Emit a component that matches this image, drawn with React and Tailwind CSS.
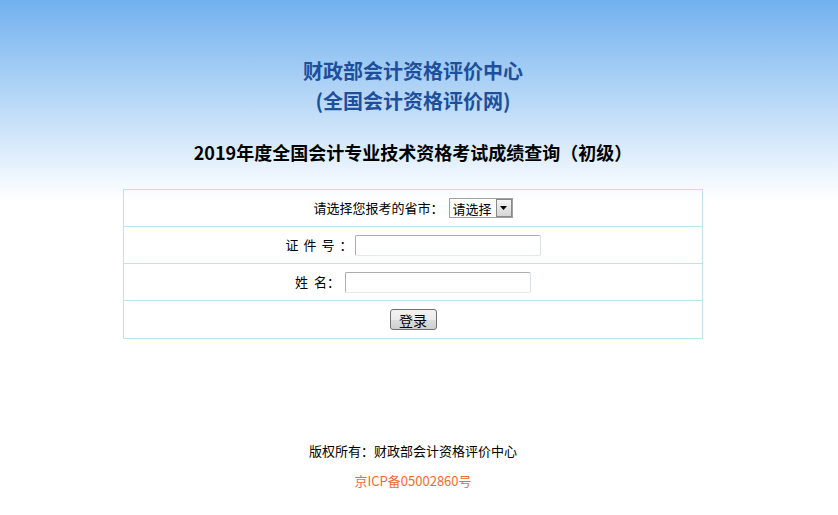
import { useState } from 'react';

const cjk = { fontFamily: '"Noto Sans CJK SC", "Liberation Sans", sans-serif' };

const Row = ({ children, last }) => (
  <div className={`flex h-[37px] items-center justify-center ${last ? '' : 'border-b border-[#bfe2f2]'}`}>{children}</div>
);

const App = () => {
  const [province, setProvince] = useState('');
  const [certNo, setCertNo] = useState('');
  const [name, setName] = useState('');

  return (
    <div className="min-h-screen bg-[linear-gradient(#71b1ef_0px,#ffffff_200px)] pr-[12px] text-[13px] text-black" style={cjk}>
      <div className="pt-[56px] text-center text-[20px] font-bold leading-[30px] text-[#1d4f9c]">
        <div>财政部会计资格评价中心</div>
        <div>(全国会计资格评价网)</div>
      </div>
      <h1 className="mt-[24px] text-center text-[18px] font-bold leading-[24px]">2019年度全国会计专业技术资格考试成绩查询（初级）</h1>

      <form className="mx-auto mt-[25px] w-[580px] border border-[#bfe2f2]" onSubmit={(e) => e.preventDefault()}>
        <Row>
          <span className="mr-[5px]">请选择您报考的省市：</span>
          <div className="relative h-[20px] w-[64px] border border-[#a0a0a0] bg-white">
            <select value={province} onChange={(e) => setProvince(e.target.value)} className="h-full w-full appearance-none bg-transparent pl-[3px] text-[13px] leading-[18px] outline-none" style={cjk}>
              <option value="">请选择</option>
            </select>
            <span className="pointer-events-none absolute right-0 top-0 flex h-[18px] w-[16px] items-center justify-center border border-[#888] bg-[linear-gradient(#f4f4f4,#d6d6d6)]">
              <svg width="7" height="4" viewBox="0 0 7 4"><path d="M0 0h7L3.5 4z" fill="#000" /></svg>
            </span>
          </div>
        </Row>
        <Row>
          <span className="tracking-[5px]">证件号</span>
          <span className="mr-[2px]">：</span>
          <input value={certNo} onChange={(e) => setCertNo(e.target.value)} className="h-[21px] w-[186px] rounded-[2px] border border-[#abadb3] border-b-[#e3e9ef] border-r-[#dbdfe6] bg-white outline-none" />
        </Row>
        <Row>
          <span className="mr-[5px]">姓&nbsp;&nbsp;名：</span>
          <input value={name} onChange={(e) => setName(e.target.value)} className="h-[21px] w-[186px] rounded-[2px] border border-[#abadb3] border-b-[#e3e9ef] border-r-[#dbdfe6] bg-white outline-none" />
        </Row>
        <Row last>
          <button type="submit" className="h-[21px] w-[47px] rounded-[3px] border border-[#707070] bg-[linear-gradient(#f2f2f2_0%,#ebebeb_50%,#dddddd_51%,#cfcfcf_100%)] text-[14px] leading-[18px]">登录</button>
        </Row>
      </form>

      <div className="mt-[97px] text-center leading-[30px]">
        <div>版权所有：财政部会计资格评价中心</div>
        <div className="text-[#f5692e]">京ICP备05002860号</div>
      </div>
    </div>
  );
};

export default App;
